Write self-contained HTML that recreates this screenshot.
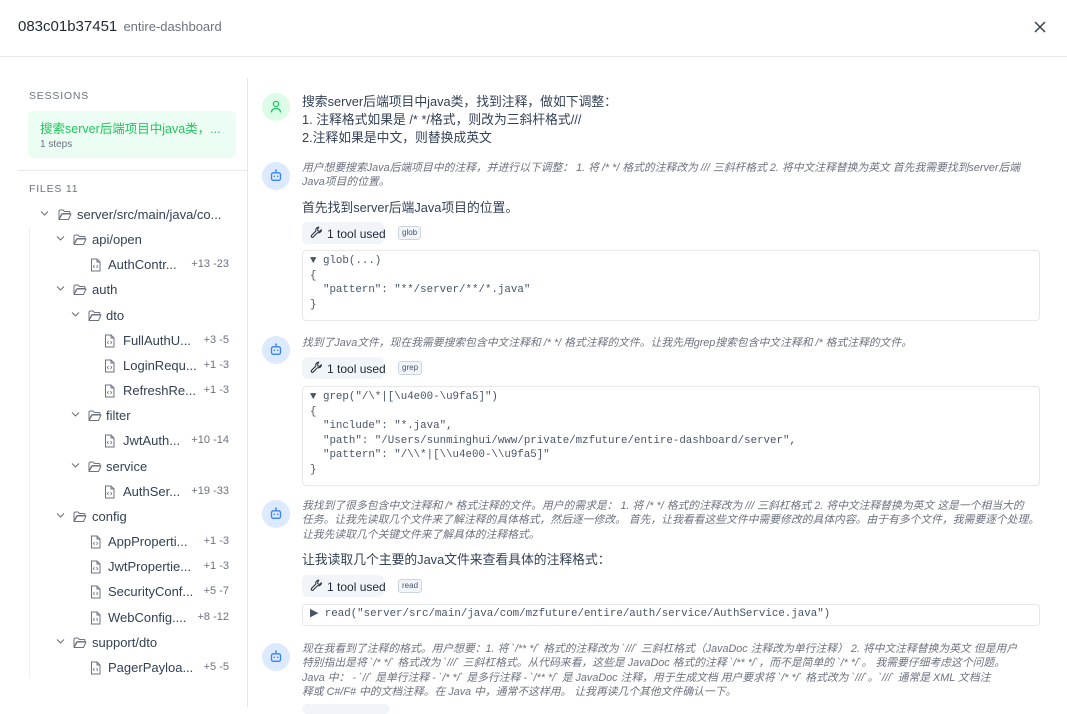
<!DOCTYPE html>
<html><head><meta charset="utf-8">
<style>
*{margin:0;padding:0;box-sizing:border-box}
body{width:1067px;height:707px;overflow:hidden;background:#fff;font-family:"Liberation Sans","Noto Sans CJK SC",sans-serif;color:#1f2937;position:relative}
.a{position:absolute;white-space:nowrap}
.t{font-size:12.8px;color:#334155}
.it{font-size:10.8px;font-style:italic;color:#6b7280;line-height:14.3px;white-space:nowrap}
.mono{font-family:"Liberation Mono",monospace;font-size:10.8px;color:#475569;white-space:pre;line-height:14.5px}
.box{position:absolute;left:302px;width:738px;border:1px solid #e5e7eb;border-radius:4px;background:#fff}
.tool{position:absolute;left:302px;height:22px;width:82px;background:#f1f5f9;border-radius:5px;font-size:12px;color:#1f2937;padding:5px 0 0 25px;white-space:nowrap}
.badge{position:absolute;left:398px;height:14px;border:1px solid #cbd5e1;background:#f1f5f9;border-radius:3px;font-size:8px;color:#475569;padding:1px 3px;font-family:"Liberation Sans",sans-serif}
.av{position:absolute;left:262px;width:28px;height:28px;border-radius:50%;background:#dbeafe}
.av.u{background:#dcfce7}
.tr{position:absolute;font-size:13px;color:#334155;white-space:nowrap}
.cnt{position:absolute;right:838px;font-size:11px;color:#6b7280;white-space:nowrap}
</style></head><body>
<div class="a" style="left:18px;top:18px;font-size:15px;color:#1f2937">083c01b37451 <span style="font-size:13px;color:#6b7280;margin-left:2px">entire-dashboard</span></div>
<svg class="a" style="left:1033px;top:20px" width="14" height="14" viewBox="0 0 14 14"><path d="M2 2L12 12M12 2L2 12" stroke="#374151" stroke-width="1.5"/></svg>
<div class="a" style="left:0;top:56px;width:1067px;height:1px;background:#e5e7eb"></div>
<div class="a" style="left:247px;top:78px;width:1px;height:629px;background:#e5e7eb"></div>

<div class="a" style="left:29px;top:90px;font-size:10.5px;letter-spacing:0.8px;color:#6b7280">SESSIONS</div>
<div class="a" style="left:28px;top:111px;width:208px;height:47px;background:#ecfdf3;border-radius:5px"></div>
<div class="a" style="left:40px;top:118px;font-size:12.5px;color:#22c55e">搜索server后端项目中java类，...</div>
<div class="a" style="left:40px;top:139px;font-size:10px;color:#6b7280">1 steps</div>
<div class="a" style="left:18px;top:170px;width:229px;height:1px;background:#e5e7eb"></div>
<div class="a" style="left:29px;top:183px;font-size:10.5px;letter-spacing:0.8px;color:#6b7280">FILES 11</div>
<div class="a" style="left:29px;top:228px;width:1px;height:450px;background:#eef0f3"></div>

<div id="tree"></div>
<script>
var rows=[
[215,'f',44,58,77,'server/src/main/java/co...'],
[240,'f',60,73,92,'api/open'],
[265,'d',0,90,108,'AuthContr...','+13 -23'],
[290,'f',60,73,92,'auth'],
[316,'f',75,88,106,'dto'],
[341,'d',0,104,123,'FullAuthU...','+3 -5'],
[366,'d',0,104,123,'LoginRequ...','+1 -3'],
[391,'d',0,104,123,'RefreshRe...','+1 -3'],
[416,'f',75,88,106,'filter'],
[441,'d',0,104,123,'JwtAuth...','+10 -14'],
[467,'f',75,88,106,'service'],
[492,'d',0,104,123,'AuthSer...','+19 -33'],
[517,'f',60,73,92,'config'],
[542,'d',0,90,108,'AppProperti...','+1 -3'],
[567,'d',0,90,108,'JwtPropertie...','+1 -3'],
[592,'d',0,90,108,'SecurityConf...','+5 -7'],
[618,'d',0,90,108,'WebConfig....','+8 -12'],
[643,'f',60,73,92,'support/dto'],
[668,'d',0,90,108,'PagerPayloa...','+5 -5']];
var h='';
rows.forEach(function(r){
var y=r[0];
if(r[1]=='f'){
h+='<svg class="a" style="left:'+(r[2]-4)+'px;top:'+(y-5)+'px" width="9" height="7" viewBox="0 0 9 7"><path d="M1 1.5L4.5 5L8 1.5" fill="none" stroke="#6b7280" stroke-width="1.1"/></svg>';
h+='<svg class="a" style="left:'+r[3]+'px;top:'+(y-6)+'px" width="14" height="12" viewBox="0 0 14 12"><path d="M1 2.5Q1 1 2.5 1H5L6.5 2.5H11Q12 2.5 12 3.5V4.5H4.5L1 10.5ZM1 10.5L3.5 5H13L10.5 10.5Z" fill="none" stroke="#6b7280" stroke-width="1" stroke-linejoin="round"/></svg>';
}else{
h+='<svg class="a" style="left:'+r[3]+'px;top:'+(y-7)+'px" width="11" height="14" viewBox="0 0 11 14"><path d="M1.5 1H7L10 4V13H1.5Z M7 1V4H10" fill="none" stroke="#6b7280" stroke-width="1"/><path d="M4.5 7L3.3 8.5L4.5 10M6.5 7L7.7 8.5L6.5 10" fill="none" stroke="#6b7280" stroke-width="0.8"/></svg>';
h+='<div class="cnt" style="top:'+(y-7)+'px">'+r[6]+'</div>';
}
h+='<div class="tr" style="left:'+r[4]+'px;top:'+(y-8)+'px">'+r[5]+'</div>';
});
document.getElementById('tree').innerHTML=h;
</script>

<div class="av u" style="top:93px"><svg style="position:absolute;left:8px;top:7px" width="12" height="14" viewBox="0 0 12 14"><circle cx="6" cy="4" r="2.6" fill="none" stroke="#22c55e" stroke-width="1.3"/><path d="M1.5 12.5Q1.5 8.5 6 8.5Q10.5 8.5 10.5 12.5" fill="none" stroke="#22c55e" stroke-width="1.3"/></svg></div>
<div id="bots"></div>
<script>
var b='';[162,336,500,643].forEach(function(t){b+='<div class="av" style="top:'+t+'px"><svg style="position:absolute;left:8px;top:7px" width="12" height="13" viewBox="0 0 12 13"><path d="M6 1V3.5" stroke="#3b82f6" stroke-width="1.2"/><circle cx="6" cy="1.3" r="0.9" fill="#3b82f6"/><rect x="1.5" y="3.8" width="9" height="7.5" rx="1.8" fill="none" stroke="#3b82f6" stroke-width="1.3"/><circle cx="4.3" cy="7.3" r="0.8" fill="#3b82f6"/><circle cx="7.7" cy="7.3" r="0.8" fill="#3b82f6"/></svg></div>'});
document.getElementById('bots').innerHTML=b;
</script>

<div class="a t" style="left:302px;top:93px;line-height:18px">搜索server后端项目中java类，找到注释，做如下调整：<br>1. 注释格式如果是 /* */格式，则改为三斜杆格式///<br>2.注释如果是中文，则替换成英文</div>

<div class="a it" style="left:302px;top:161px">用户想要搜索Java后端项目中的注释，并进行以下调整： 1. 将 /* */ 格式的注释改为 /// 三斜杆格式 2. 将中文注释替换为英文 首先我需要找到server后端<br>Java项目的位置。</div>
<div class="a t" style="left:302px;top:197px">首先找到server后端Java项目的位置。</div>
<div class="tool" style="top:222px">1 tool used</div>
<div class="badge" style="top:226px">glob</div>
<div class="box" style="top:250px;height:71px"></div>
<div class="a mono" style="left:310px;top:254px">▼ glob(...)
{
  "pattern": "**/server/**/*.java"
}</div>

<div class="a it" style="left:302px;top:336px">找到了Java文件，现在我需要搜索包含中文注释和 /* */ 格式注释的文件。让我先用grep搜索包含中文注释和 /* 格式注释的文件。</div>
<div class="tool" style="top:357px">1 tool used</div>
<div class="badge" style="top:361px">grep</div>
<div class="box" style="top:386px;height:100px"></div>
<div class="a mono" style="left:310px;top:390px">▼ grep("/\*|[\u4e00-\u9fa5]")
{
  "include": "*.java",
  "path": "/Users/sunminghui/www/private/mzfuture/entire-dashboard/server",
  "pattern": "/\\*|[\\u4e00-\\u9fa5]"
}</div>

<div class="a it" style="left:302px;top:499px">我找到了很多包含中文注释和 /* 格式注释的文件。用户的需求是： 1. 将 /* */ 格式的注释改为 /// 三斜杠格式 2. 将中文注释替换为英文 这是一个相当大的<br>任务。让我先读取几个文件来了解注释的具体格式，然后逐一修改。 首先，让我看看这些文件中需要修改的具体内容。由于有多个文件，我需要逐个处理。<br>让我先读取几个关键文件来了解具体的注释格式。</div>
<div class="a t" style="left:302px;top:549px">让我读取几个主要的Java文件来查看具体的注释格式：</div>
<div class="tool" style="top:575px">1 tool used</div>
<div class="badge" style="top:579px">read</div>
<div class="box" style="top:604px;height:22px"></div>
<div class="a mono" style="left:310px;top:607px">▶ read("server/src/main/java/com/mzfuture/entire/auth/service/AuthService.java")</div>

<div class="a it" style="left:302px;top:642px">现在我看到了注释的格式。用户想要：1. 将 `/** */` 格式的注释改为 `///` 三斜杠格式（JavaDoc 注释改为单行注释） 2. 将中文注释替换为英文 但是用户<br>特别指出是将 `/* */` 格式改为 `///` 三斜杠格式。从代码来看，这些是 JavaDoc 格式的注释 `/** */`，而不是简单的 `/* */`。 我需要仔细考虑这个问题。<br>Java 中： - `//` 是单行注释 - `/* */` 是多行注释 - `/** */` 是 JavaDoc 注释，用于生成文档 用户要求将 `/* */` 格式改为 `///`。`///` 通常是 XML 文档注<br>释或 C#/F# 中的文档注释。在 Java 中，通常不这样用。 让我再读几个其他文件确认一下。</div>
<div class="a" style="left:302px;top:704px;width:88px;height:10px;background:#f1f5f9;border-radius:5px"></div>

<script>
document.querySelectorAll('.tool').forEach(function(e){e.insertAdjacentHTML('afterbegin','<svg style="position:absolute;left:8px;top:4px" width="13" height="13" viewBox="0 0 14 14"><path d="M9.5 1.2a3.3 3.3 0 0 0-3.2 4.2L1.5 10.2a1.3 1.3 0 0 0 1.8 1.8l4.8-4.8a3.3 3.3 0 0 0 4.2-3.2L10.5 5.8 8.6 5.4 8.2 3.5Z" fill="none" stroke="#1f2937" stroke-width="1.1" stroke-linejoin="round"/></svg>')});
</script>
</body></html>
